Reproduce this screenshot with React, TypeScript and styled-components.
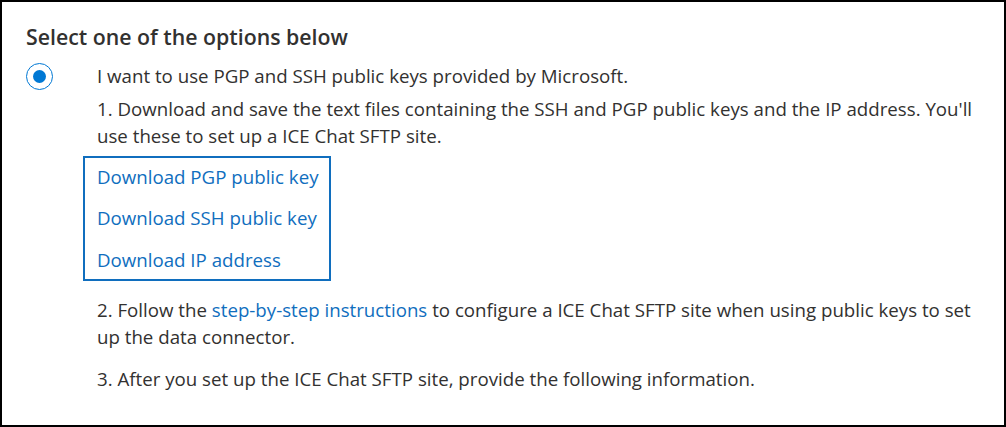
import styled, { createGlobalStyle } from "styled-components";

const GlobalStyle = createGlobalStyle`
  html, body {
    margin: 0;
    padding: 0;
    background: #ffffff;
  }
  body {
    font-family: "Open Sans", "Noto Sans", "Liberation Sans", sans-serif;
    color: #323130;
  }
`;

const Frame = styled.div`
  width: 1006px;
  height: 427px;
  box-sizing: border-box;
  border: 2px solid #000;
  padding: 21px 0 0 24px;
  background: #fff;
  overflow: hidden;
`;

const Heading = styled.h2`
  margin: 0;
  font-size: 21.3px;
  font-weight: 600;
  line-height: 28px;
  color: #323130;
`;

const Option = styled.div`
  display: flex;
  align-items: flex-start;
  margin-top: 11px;
`;

const RadioWrap = styled.div`
  width: 71px;
  flex: none;
  padding-top: 1px;
`;

const Radio = styled.span<{ $checked?: boolean }>`
  display: flex;
  align-items: center;
  justify-content: center;
  width: 27px;
  height: 27px;
  box-sizing: border-box;
  border-radius: 50%;
  border: 1.25px solid #0078d4;
  &::after {
    content: "";
    width: 13px;
    height: 13px;
    border-radius: 50%;
    background: ${(p) => (p.$checked ? "#0078d4" : "transparent")};
  }
`;

const Content = styled.div`
  flex: 1;
  padding-right: 10px;
  font-size: 18.7px;
  line-height: 27px;
`;

const Para = styled.p<{ $gap?: number }>`
  margin: ${(p) => p.$gap ?? 0}px 0 0;
`;

const LinkBox = styled.div`
  display: inline-flex;
  flex-direction: column;
  gap: 14.5px;
  margin: 7px 0 0 -14px;
  padding: 4.5px 10px 6.5px 12px;
  border: 2px solid #106ebe;
`;

const Link = styled.a`
  color: #106ebe;
  text-decoration: none;
  cursor: pointer;
`;

export default function App() {
  return (
    <>
      <GlobalStyle />
      <Frame>
        <Heading>Select one of the options below</Heading>
        <Option>
          <RadioWrap>
            <Radio $checked />
          </RadioWrap>
          <Content>
            <Para>I want to use PGP and SSH public keys provided by Microsoft.</Para>
            <Para $gap={6}>
              1. Download and save the text files containing the SSH and PGP public keys and the IP
              address. You'll use these to set up a ICE Chat SFTP site.
            </Para>
            <LinkBox>
              <Link>Download PGP public key</Link>
              <Link>Download SSH public key</Link>
              <Link>Download IP address</Link>
            </LinkBox>
            <Para $gap={15}>
              2. Follow the <Link>step-by-step instructions</Link> to configure a ICE Chat SFTP site
              when using public keys to set up the data connector.
            </Para>
            <Para $gap={15}>
              3. After you set up the ICE Chat SFTP site, provide the following information.
            </Para>
          </Content>
        </Option>
      </Frame>
    </>
  );
}
